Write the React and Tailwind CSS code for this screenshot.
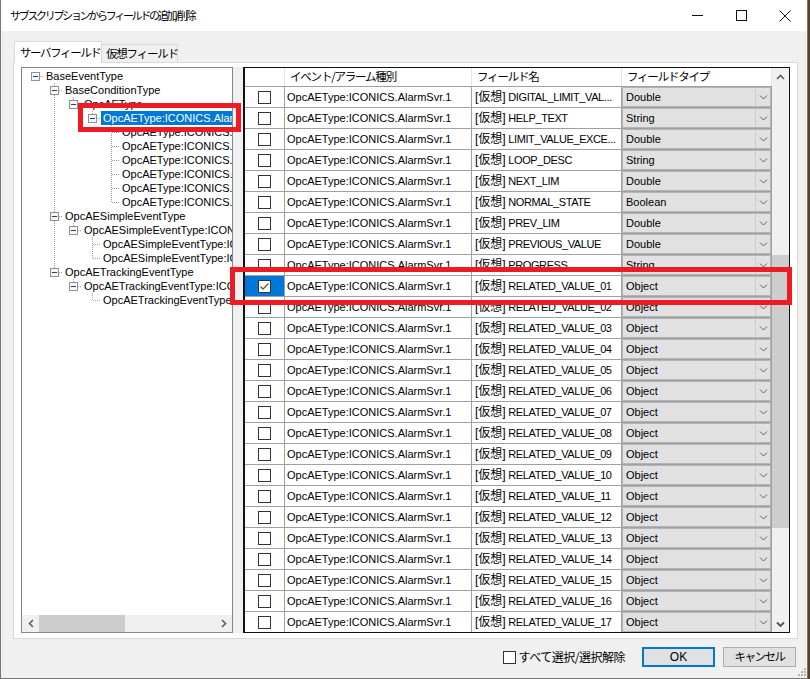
const JP = "font-['Noto_Sans_CJK_JP',sans-serif] whitespace-nowrap";

const treeRows = [
  { level: 0, text: "BaseEventType", box: true, full: [], next: false, root: true },
  { level: 1, text: "BaseConditionType", box: true, full: [], next: true },
  { level: 2, text: "OpcAEType", box: true, full: [1], next: false },
  { level: 3, text: "OpcAEType:ICONICS.AlarmSvr.1", box: true, full: [1], next: false, selected: true },
  { level: 4, text: "OpcAEType:ICONICS.AlarmSvr.1", full: [1], next: true },
  { level: 4, text: "OpcAEType:ICONICS.AlarmSvr.1", full: [1], next: true },
  { level: 4, text: "OpcAEType:ICONICS.AlarmSvr.1", full: [1], next: true },
  { level: 4, text: "OpcAEType:ICONICS.AlarmSvr.1", full: [1], next: true },
  { level: 4, text: "OpcAEType:ICONICS.AlarmSvr.1", full: [1], next: true },
  { level: 4, text: "OpcAEType:ICONICS.AlarmSvr.1", full: [1], next: false },
  { level: 1, text: "OpcAESimpleEventType", box: true, full: [], next: true },
  { level: 2, text: "OpcAESimpleEventType:ICONICS.AlarmSvr.1", box: true, full: [1], next: false },
  { level: 3, text: "OpcAESimpleEventType:ICONICS.AlarmSvr.1", full: [1], next: true },
  { level: 3, text: "OpcAESimpleEventType:ICONICS.AlarmSvr.1", full: [1], next: false },
  { level: 1, text: "OpcAETrackingEventType", box: true, full: [], next: false },
  { level: 2, text: "OpcAETrackingEventType:ICONICS.AlarmSvr.1", box: true, full: [], next: false },
  { level: 3, text: "OpcAETrackingEventType:ICONICS.AlarmSvr.1", full: [], next: false },
];

const fields = [
  ["DIGITAL_LIMIT_VAL...", "Double"],
  ["HELP_TEXT", "String"],
  ["LIMIT_VALUE_EXCE...", "Double"],
  ["LOOP_DESC", "String"],
  ["NEXT_LIM", "Double"],
  ["NORMAL_STATE", "Boolean"],
  ["PREV_LIM", "Double"],
  ["PREVIOUS_VALUE", "Double"],
  ["PROGRESS", "String"],
  ...Array.from({ length: 17 }, (_, i) => [
    "RELATED_VALUE_" + String(i + 1).padStart(2, "0"),
    "Object",
  ]),
];

const cx = (l) => 13 + 19 * l + 0.5;

function TreeRow({ r }) {
  const L = r.level;
  const w = 22 + 19 * L;
  const dot = { stroke: "#a0a0a0", strokeWidth: 1, strokeDasharray: "1 1", shapeRendering: "crispEdges" };
  return (
    <div className="flex h-[14px] items-center whitespace-nowrap">
      <svg width={w} height={14} className="shrink-0">
        {r.full.map((l) => (
          <line key={l} x1={cx(l)} y1={0} x2={cx(l)} y2={14} {...dot} />
        ))}
        {!r.root && <line x1={cx(L)} y1={0} x2={cx(L)} y2={r.next ? 14 : 7} {...dot} />}
        <line x1={cx(L)} y1={7.5} x2={w} y2={7.5} {...dot} />
        {r.box && (
          <g shapeRendering="crispEdges">
            <rect x={9.5 + 19 * L} y={3.5} width={8} height={8} fill="#f7f7f7" stroke="#919191" />
            <line x1={11 + 19 * L} y1={7.5} x2={16 + 19 * L} y2={7.5} stroke="#1f3f8f" />
          </g>
        )}
      </svg>
      <span
        className={`px-[2px] h-[14px] leading-[14px] text-[11px] ${
          r.selected ? "bg-[#0078d7] text-white" : "text-black"
        }`}
      >
        {r.text}
      </span>
    </div>
  );
}

function Chevron({ down = true, color = "#606060", w = 7, sw = 1 }) {
  return (
    <svg width={w + 2} height={6} viewBox={`0 0 ${w + 2} 6`}>
      <polyline
        points={down ? `1,1.5 ${1 + w / 2},${1.5 + w / 2} ${1 + w},1.5` : `1,${1.5 + w / 2} ${1 + w / 2},1.5 ${1 + w},${1.5 + w / 2}`}
        fill="none"
        stroke={color}
        strokeWidth={sw}
      />
    </svg>
  );
}

function ListRow({ name, type, checked }) {
  return (
    <div className="flex h-[21px] shrink-0">
      <div
        className={`w-[40px] shrink-0 border-r border-b border-[#a0a0a0] flex items-center justify-center ${
          checked ? "bg-[#0078d7]" : "bg-white"
        }`}
      >
        <div className="w-[13px] h-[13px] border border-[#333333] bg-white flex items-center justify-center">
          {checked && (
            <svg width="11" height="11" viewBox="0 0 11 11">
              <polyline points="1.5,5.5 4,8 9.5,2.5" fill="none" stroke="#5a5a5a" strokeWidth="1.3" />
            </svg>
          )}
        </div>
      </div>
      <div className="w-[187px] shrink-0 border-r border-b border-[#a0a0a0] pl-[2px] flex items-center text-[11px] overflow-hidden whitespace-nowrap bg-white">
        OpcAEType:ICONICS.AlarmSvr.1
      </div>
      <div className="w-[150px] shrink-0 border-r border-b border-[#a0a0a0] pl-[3px] flex items-center text-[11px] overflow-hidden whitespace-nowrap bg-white tracking-[-0.4px]">
        <span className="text-[12px] tracking-normal">[仮想]</span>
        <span>&nbsp;{name}</span>
      </div>
      <div className="w-[150px] shrink-0 border-r border-b border-[#a0a0a0] flex">
        <div className="flex-1 flex bg-[#e1e1e1] border border-[#b4b4b4]">
          <div className="flex-1 pl-[3px] flex items-center text-[11px]">{type}</div>
          <div className="w-[15px] border-l border-[#cdcdcd] flex items-center justify-center">
            <Chevron />
          </div>
        </div>
      </div>
    </div>
  );
}

export default function App() {
  return (
    <div className="relative w-[810px] h-[679px] bg-[#5a4328] flex font-['Liberation_Sans','Noto_Sans_CJK_JP',sans-serif] text-black">
      {/* WINDOW */}
      <div className="w-[808px] h-[679px] bg-[#f0f0f0] border-x border-b border-[#777777] flex flex-col">
        {/* TITLE BAR */}
        <div className="h-[31px] bg-white flex items-center shrink-0">
          <span className={`pl-[9px] text-[11px] tracking-[-2.3px] ${JP}`}>サブスクリプションからフィールドの追加/削除</span>
          <div className="ml-auto flex h-full">
            <div className="w-[44px] h-full flex items-center justify-center">
              <svg width="11" height="11"><line x1="0" y1="5.5" x2="11" y2="5.5" stroke="#111" /></svg>
            </div>
            <div className="w-[44px] h-full flex items-center justify-center">
              <svg width="11" height="11"><rect x="0.5" y="0.5" width="10" height="10" fill="none" stroke="#111" /></svg>
            </div>
            <div className="w-[44px] h-full flex items-center justify-center">
              <svg width="12" height="12">
                <line x1="0.5" y1="0.5" x2="11.5" y2="11.5" stroke="#111" />
                <line x1="11.5" y1="0.5" x2="0.5" y2="11.5" stroke="#111" />
              </svg>
            </div>
          </div>
        </div>

        {/* TABS */}
        <div className="pt-[10px] ml-[12px]">
          <div className="flex items-end h-[21px] pl-[1px]">
            <div className={`relative z-10 -mb-px h-[22px] w-[88px] bg-white border-l border-t border-r border-[#d9d9d9] pl-[5px] flex items-center text-[11.5px] tracking-[-1.4px] ${JP}`}>
              サーバフィールド
            </div>
            <div className={`h-[18px] w-[76px] border-t border-r border-[#d9d9d9] bg-[#f0f0f0] pl-[4px] flex items-center text-[11.5px] tracking-[-1.2px] ${JP}`}>
              仮想フィールド
            </div>
          </div>

          {/* TAB PAGE */}
          <div className="w-[785px] h-[577px] border border-[#d9d9d9] bg-white pt-[4px] px-[7px]">
            <div className="flex h-[566px]">
              {/* TREE */}
              <div className="w-[212px] h-full border border-[#828790] bg-white flex flex-col overflow-hidden">
                <div className="pt-[1px] flex-1 overflow-hidden">
                  {treeRows.map((r, i) => (
                    <TreeRow key={i} r={r} />
                  ))}
                </div>
                <div className="h-[17px] flex bg-[#f0f0f0] shrink-0">
                  <div className="w-[17px] flex items-center justify-center">
                    <svg width="6" height="9"><polyline points="5,1 1.5,4.5 5,8" fill="none" stroke="#606060" strokeWidth="1.6" /></svg>
                  </div>
                  <div className="w-[86px] bg-[#cdcdcd]" />
                  <div className="flex-1" />
                  <div className="w-[17px] flex items-center justify-center">
                    <svg width="6" height="9"><polyline points="1,1 4.5,4.5 1,8" fill="none" stroke="#606060" strokeWidth="1.6" /></svg>
                  </div>
                </div>
              </div>

              {/* SPLITTER */}
              <div className="w-[10px] h-full bg-[#f0f0f0]" />

              {/* LIST */}
              <div className="w-[547px] h-full border border-l-2 border-[#111111] flex overflow-hidden">
                <div className="w-[527px] flex flex-col overflow-hidden">
                  <div className={`flex h-[19px] shrink-0 border-b border-[#a0a0a0] bg-white text-[11.5px] tracking-[-1.2px] ${JP}`}>
                    <div className="w-[40px] border-r border-[#e5e5e5]" />
                    <div className="w-[187px] border-r border-[#e5e5e5] pl-[5px] flex items-center">イベント/アラーム種別</div>
                    <div className="w-[150px] border-r border-[#e5e5e5] pl-[5px] flex items-center">フィールド名</div>
                    <div className="w-[150px] border-r border-[#e5e5e5] pl-[5px] flex items-center">フィールドタイプ</div>
                  </div>
                  {fields.map(([n, t], i) => (
                    <ListRow key={i} name={n} type={t} checked={n === "RELATED_VALUE_01"} />
                  ))}
                </div>
                {/* VERTICAL SCROLLBAR */}
                <div className="w-[17px] bg-[#f0f0f0] flex flex-col">
                  <div className="h-[17px] flex items-center justify-center">
                    <Chevron down={false} color="#606060" w={7} sw={1.6} />
                  </div>
                  <div className="flex-1 pt-[170px]">
                    <div className="h-[273px] bg-[#cdcdcd]" />
                  </div>
                  <div className="h-[17px] flex items-center justify-center">
                    <Chevron color="#505050" w={7} sw={1.8} />
                  </div>
                </div>
              </div>
            </div>
          </div>
        </div>

        {/* BOTTOM BAR */}
        <div className="mt-[8px] h-[20px] flex items-center justify-end pr-[11px]">
          <div className="w-[13px] h-[13px] border border-[#333333] bg-white" />
          <span className={`ml-[3px] text-[12px] tracking-[-0.5px] ${JP}`}>すべて選択/選択解除</span>
          <button className="ml-[17px] w-[73px] h-[20px] border-2 border-[#0078d7] bg-[#e1e1e1] text-[12px] flex items-center justify-center">
            OK
          </button>
          <button className={`ml-[8px] w-[73px] h-[20px] border border-[#adadad] bg-[#e1e1e1] text-[11.5px] tracking-[-1.5px] flex items-center justify-center ${JP}`}>
            キャンセル
          </button>
        </div>
      </div>

      {/* RESIZE GRIP */}
      <svg className="absolute left-[797px] top-[667px]" width="10" height="10">
        {[[7, 1], [4, 4], [7, 4], [1, 7], [4, 7], [7, 7]].map(([x, y], i) => (
          <rect key={i} x={x} y={y} width="2" height="2" fill="#b8b8b8" />
        ))}
      </svg>

      {/* ANNOTATION OVERLAYS */}
      <div className="absolute left-[78px] top-[103px] w-[163px] h-[29px] border-[5px] border-[#ed1c24]" />
      <div className="absolute left-[230px] top-[267px] w-[562px] h-[38px] border-[5px] border-[#ed1c24]" />
    </div>
  );
}
